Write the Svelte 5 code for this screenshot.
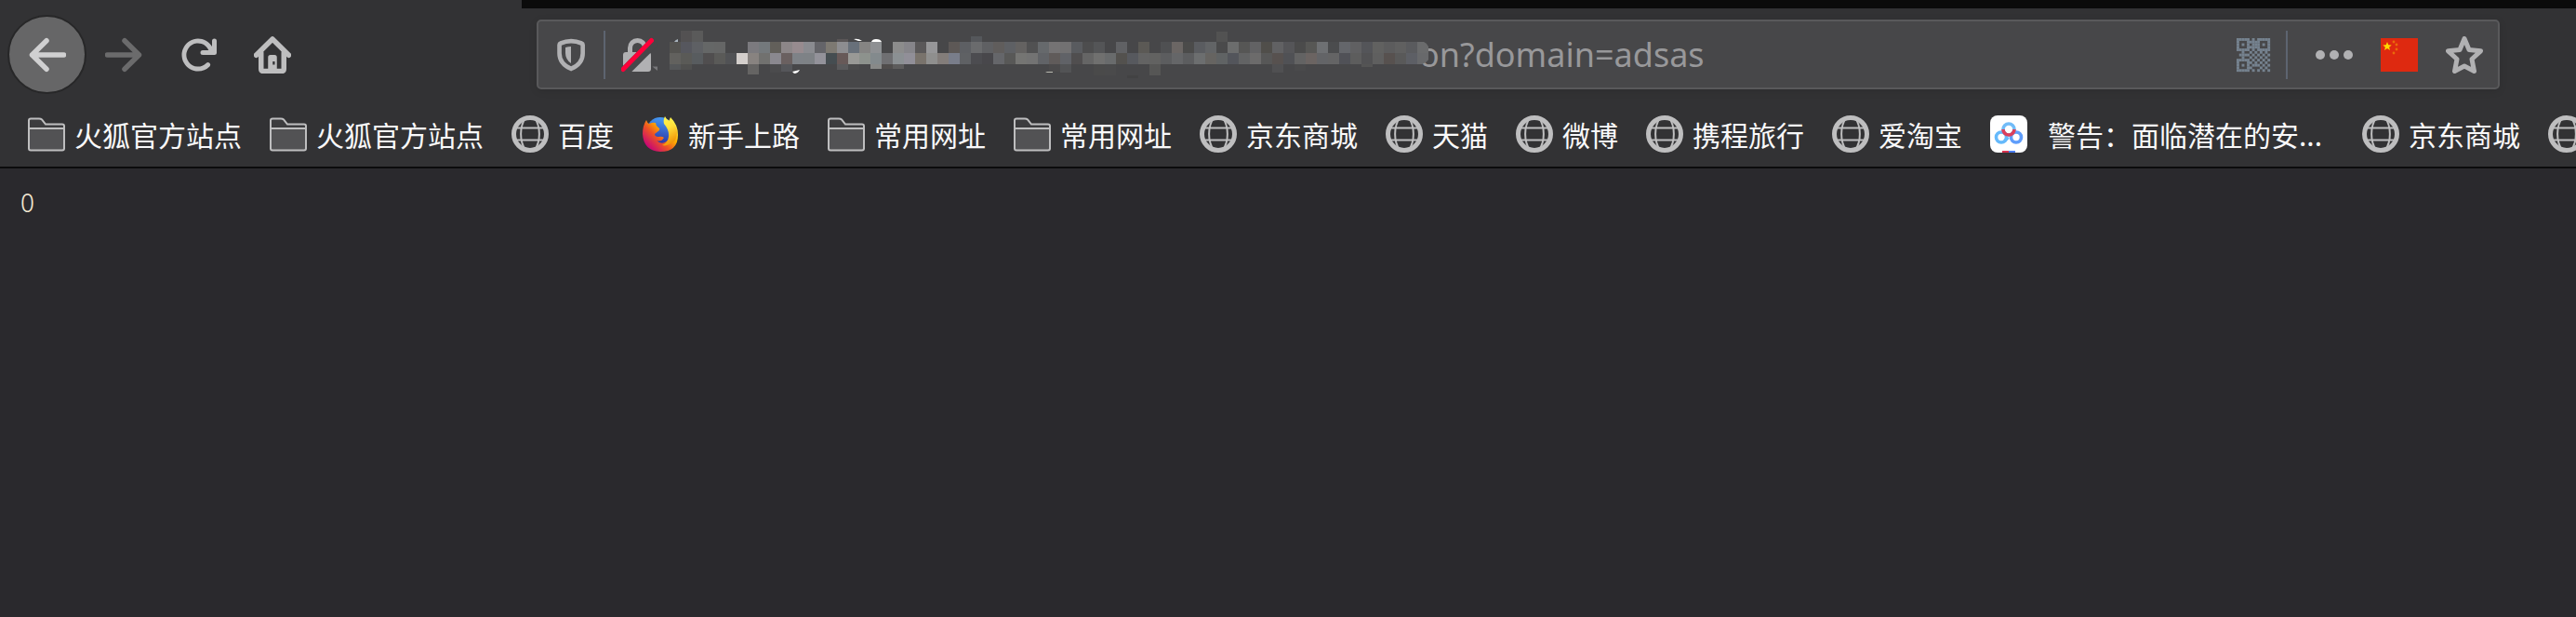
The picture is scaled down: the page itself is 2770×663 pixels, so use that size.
<script>
  const bookmarks = [
    { icon: 'folder', label: '火狐官方站点' },
    { icon: 'folder', label: '火狐官方站点' },
    { icon: 'globe', label: '百度' },
    { icon: 'firefox', label: '新手上路' },
    { icon: 'folder', label: '常用网址' },
    { icon: 'folder', label: '常用网址' },
    { icon: 'globe', label: '京东商城' },
    { icon: 'globe', label: '天猫' },
    { icon: 'globe', label: '微博' },
    { icon: 'globe', label: '携程旅行' },
    { icon: 'globe', label: '爱淘宝' },
    { icon: 'cloud', label: '警告：面临潜在的安...' },
    { icon: 'globe', label: '京东商城' },
    { icon: 'globe', label: '' }
  ];

  // Censored part of the address: two full rows of 12px cells, "-" leaves a cell empty.
  const upper =
    '545350 56575e 5e6064 656767 656666 - - 7b7a7e 74797c 625f5a 8c8688 978b8f 8a8b90 646469 7d7972 8d8d90 68707a 858483 8e9093 - 8c8c8c 86858a 5a5859 969698 - 5d5856 5d5f63 6a6b6d 5f6063 605d5c 5e6064 646261 515152 66696c 757374 727172 595b5f 4d4d4e 545557 - 606164 - 5b5955 - 4f5052 6b6664 4b4b4a 5a5c60 626466 4a4a4b 6c6d6d 565655 626264 504e4a 616163 555558 4b4b4b 575755 6e7073 4b4c4e 64666b 606062 545559 616160 5c5c5d 606060 5a5b5e'.split(' ');
  const lower =
    '62615e 5a5a57 585c5f 504e4f 5a5a58 515255 d4cfcc 888380 71716f 8a888f 6a6060 7e8287 7e8286 93929a 454d51 675958 999996 8d928d 838a8d 6f6f72 8b9093 918f98 79736c 8f8f8e 837d7a 797d8a 5f6164 4c4c50 48474b 65666a 585857 757573 737373 616367 605b5a 606267 504e4f 656565 70706f 696b6c 53514e 57595e 636363 626261 5c5d5f 656668 5c5d5f 6c6e6f 666461 606364 53555b 626364 6c6b6b 575757 57514f 505155 636363 6b6462 636467 646465 505157 5d5d5d 525254 5f5f5f 57514f 595959 5d5f65'.split(' ');
  // Cells above and below the rows: column, top, height, colour.
  const edges = [
    [1, 0, 12, '535152'], [2, 0, 12, '5a5a5a'], [15, 9, 3, '5a5657'], [27, 6, 6, '55575b'], [49, 1, 11, '525252'],
    [0, 36, 6, '555759'], [1, 36, 6, '50504f'], [7, 36, 11, '656463'], [9, 36, 9, '4b4b4d'], [10, 36, 8, '55565a'],
    [15, 36, 6, '5a5a5c'], [16, 36, 6, '4b4b4c'], [18, 36, 5, '888988'], [19, 36, 5, '504d4c'], [20, 36, 5, '5d5c5c'],
    [34, 36, 8, '4b4a4b'], [35, 36, 9, '525355'], [38, 36, 12, '4a4a4a'], [39, 36, 12, '4a4a4b'], [43, 36, 12, '565655'],
    [54, 36, 9, '505052'], [56, 36, 7, '4a4a4b'], [62, 36, 3, '545454'], [41, 48, 3, '424243']
  ];

  // 13 x 13 module pattern of the QR button.
  const qr = [
    '1111101011111', '1000111110001', '1010101110101', '1000111110001', '1111101011111',
    '0010010101010', '0111101010101', '0010010101010', '1111101010101', '1000110101010',
    '1010101110101', '1000110001010', '1111101010101'
  ];
  const modules = qr.flatMap((row, y) => [...row].map((on, x) => ({ on: on === '1', x, y }))).filter((m) => m.on);

  let address = $state('on?domain=adsas');
</script>

<div class="browser">
  <header>
    <div class="tabstrip"></div>
    <nav class="toolbar" aria-label="导航">
      <button class="back" aria-label="后退">
        <svg viewBox="0 0 16 16"><path class="line" d="M15 8H1.4M7.6 1.9 1.4 8l6.2 6.1" /></svg>
      </button>
      <button class="tool forward" aria-label="前进">
        <svg viewBox="0 0 16 16"><path class="line" d="M1 8h13.6M8.4 1.9 14.6 8l-6.2 6.1" /></svg>
      </button>
      <button class="tool" aria-label="重新载入">
        <svg viewBox="0 0 16 16"><path fill="currentColor" d="M15 1a1 1 0 0 0-1 1v2.418A6.995 6.995 0 1 0 8 15a6.954 6.954 0 0 0 4.95-2.05 1 1 0 0 0-1.414-1.414A5.019 5.019 0 1 1 12.549 6H10a1 1 0 0 0 0 2h5a1 1 0 0 0 1-1V2a1 1 0 0 0-1-1z" /></svg>
      </button>
      <button class="tool" aria-label="主页">
        <svg viewBox="0 0 16 16">
          <path class="line" d="M1 8.1 8 1.2l7 6.9M3.1 7v7q0 1 1 1h7.8q1 0 1-1V7" />
          <path fill="currentColor" fill-rule="evenodd" d="M6.100 15V9q0-1 1-1h1.800q1 0 1 1v6zM8.100 10.800h.9v1.400h-.9z" />
        </svg>
      </button>

      <div class="urlbar">
        <button class="inner" aria-label="跟踪保护">
          <svg viewBox="0 0 40 40">
            <path d="M20 4.500c4 0 8.500 1 12 2.500 1 .4 1.500 1 1.500 2v9.500c0 8-5.500 14.500-13.500 18-8-3.500-13.500-10-13.500-18V9c0-1 .5-1.600 1.500-2C11.500 5.500 16 4.500 20 4.500z" transform="translate(1.500 1) scale(.93)" fill="none" stroke="currentColor" stroke-width="5" />
            <path d="M20 11v18q-6-4-6-11v-6q3-1 6-1z" fill="currentColor" />
          </svg>
        </button>
        <span class="rule"></span>
        <button class="inner lock" aria-label="连接不安全">
          <svg viewBox="0 0 40 40">
            <path d="M9.500 19v-6.500a8 8 0 0 1 16 0V19" fill="none" stroke="currentColor" stroke-width="5" />
            <rect x="2" y="17" width="30" height="21" rx="3" fill="currentColor" />
            <path d="M3 38.500 36 5.500" stroke="#474749" stroke-width="11" />
            <path d="M2 35.500 32.500 4.500" stroke="#ff0039" stroke-width="5" stroke-linecap="round" />
            <path d="M33.500 32.500H39V37z" fill="#77777a" />
          </svg>
        </button>
        <svg class="mosaic" viewBox="0 0 816 52" aria-hidden="true">
          {#each upper as c, i}
            {#if c !== '-'}<rect x={i * 12} y="12" width="12" height="12" fill="#{c}" />{/if}
          {/each}
          {#each lower as c, i}
            <rect x={i * 12} y="24" width="12" height="12" fill="#{c}" />
          {/each}
          {#each edges as [col, y, h, c]}
            <rect x={col * 12} {y} width="12" height={h} fill="#{c}" />
          {/each}
          <path d="M804 12h7q3 1 5 5v7h-12z" fill="#6a6b6c" />
          <path d="M804 24h14q0 9-9 12h-5z" fill="#68696b" />
          <path d="M5 12q1-2 4-3v3z" fill="#a9b4bd" />
          <path d="M198 9q5-1 9 2h-4q-3-1-5-2zM217 12q1-3 5-3 5 0 6 3zM132 44l8-2q-2 4-6 4z" fill="#fff" />
          <path d="M404 44h8v1h-6z" fill="#b9b9b0" />
        </svg>
        <input type="text" aria-label="地址" bind:value={address} spellcheck="false" />
        <button class="inner" aria-label="二维码">
          <svg viewBox="0 0 40 40" fill="#75828f">
            {#each modules as m}
              <rect x={2 + m.x * 2.77} y={2 + m.y * 2.77} width="2.900" height="2.900" />
            {/each}
          </svg>
        </button>
        <span class="rule"></span>
        <button class="inner" aria-label="页面操作">
          <svg viewBox="0 0 40 40" fill="currentColor"><circle cx="5" cy="20" r="5" /><circle cx="20" cy="20" r="5" /><circle cx="35" cy="20" r="5" /></svg>
        </button>
        <button class="inner" aria-label="中国">
          <svg viewBox="0 0 40 40">
            <path fill="#de2910" d="M0 2h40v36H0z" />
            <path fill="#ffd800" d="m7 6 1.300 3.300 3.400.2-2.600 2.200.9 3.300-3-1.900L4 15l.9-3.300-2.600-2.200 3.400-.2z" />
            <g fill="#ea6a0b"><circle cx="14" cy="6" r="1.400" /><circle cx="17" cy="9" r="1.400" /><circle cx="17" cy="14" r="1.400" /><circle cx="14" cy="18" r="1.400" /></g>
          </svg>
        </button>
        <button class="inner" aria-label="添加书签">
          <svg viewBox="0 0 40 40"><path d="m20 2.500 5 12 12.500 1.300-9.500 8.700 2.500 13L20 32 9.500 37.500l2.500-13-9.500-8.700L15 14.500z" fill="none" stroke="currentColor" stroke-width="5" stroke-linejoin="round" /></svg>
        </button>
      </div>
    </nav>

    <nav class="bookmarks" aria-label="书签">
      {#each bookmarks as b}
        <a href="#bookmark" class:wide={b.icon === 'cloud'} aria-label={b.label || '书签'}>
          {#if b.icon === 'folder'}
            <svg viewBox="0 0 40 40">
              <path d="M1 36V5q0-2 2-2h10q2 0 3 1l4 5h17q2 0 2 2v25q0 2-2 2H3q-2 0-2-2z" fill="#3c3c3e" />
              <path d="M1 14h38v23H1z" fill="#525254" />
              <path d="M1 35.500V5.500q0-2 2-2h9q2 0 3 1l4 5h18q2 0 2 2v24q0 2-2 2H3q-2 0-2-2zM1 14h38" fill="none" stroke="currentColor" stroke-width="2" />
            </svg>
          {:else if b.icon === 'globe'}
            <svg viewBox="0 0 40 40" fill="none" stroke="currentColor">
              <circle cx="20" cy="20" r="17.500" stroke-width="5" />
              <path d="M15 3C8.500 12 8.500 28 15 37M25 3c6.500 9 6.500 25 0 34M4 13.500h32M4 26.500h32" stroke-width="2" />
            </svg>
          {:else if b.icon === 'firefox'}
            <svg viewBox="0 0 40 40">
              <defs>
                <linearGradient id="fox" x1=".85" y1=".1" x2=".1" y2=".85">
                  <stop offset="0" stop-color="#fff14a" /><stop offset=".35" stop-color="#ffb000" /><stop offset=".62" stop-color="#ee5324" /><stop offset="1" stop-color="#c4007c" />
                </linearGradient>
                <linearGradient id="sky" x1=".6" y1="0" x2=".4" y2="1">
                  <stop offset="0" stop-color="#459cf5" /><stop offset="1" stop-color="#2b2b9c" />
                </linearGradient>
                <linearGradient id="tail" x1=".3" y1="0" x2=".6" y2="1">
                  <stop offset="0" stop-color="#fff44f" /><stop offset=".4" stop-color="#ffe03a" /><stop offset="1" stop-color="#f08a00" />
                </linearGradient>
              </defs>
              <circle cx="20" cy="17" r="15" fill="url(#sky)" />
              <path d="M5 5q1 3 3 4 4-2 7-1 0 3 3 5 2 1 1 3l-5 4q0 3 4 3 4-1 6 1-3 5-8 3 4 4 9 2 7-3 6-12-1-6-4-9 3-2 4-6 8 8 8 19 0 18-19 18Q2 38 1 20 1 11 5 5z" fill="url(#fox)" />
              <path d="M25 1q-2 4-1 8 6 7 5 14-1 7-7 9 6 2 14-5Q42 13 30 6q-4-2-5-5z" fill="url(#tail)" />
            </svg>
          {:else}
            <svg viewBox="0 0 40 40">
              <rect width="40" height="40" rx="8" fill="#fff" />
              <g fill="none" stroke-width="3.600">
                <circle cx="12" cy="23.500" r="5.500" stroke="#65b9fb" />
                <circle cx="28" cy="23.500" r="5.500" stroke="#5f9dfb" />
                <circle cx="20" cy="15" r="6" stroke="#71bcf8" />
                <path d="M14 15a6 6 0 0 0 12 0" stroke="#dc3f5c" />
                <path d="m15.500 27.500 4-4" stroke="#65b9fb" />
              </g>
              <path d="M13 38h7v2h-7z" fill="#d8344f" /><path d="M20 38h7v2h-7z" fill="#4b7df0" />
            </svg>
          {/if}
          <span>{b.label}</span>
        </a>
      {/each}
    </nav>
  </header>
  <main>0</main>
</div>

<style>
  :global(body) {
    background: #2a292d;
  }
  .browser {
    overflow: hidden;
    font-family: 'Noto Sans CJK SC', sans-serif;
  }
  header {
    background: #323234;
    border-bottom: 2px solid #0c0c0d;
  }
  .tabstrip {
    height: 9px;
    margin-left: 561px;
    background: #0b0b0b;
  }
  button {
    display: flex;
    align-items: center;
    justify-content: center;
    flex: none;
    padding: 0;
    border: 0;
    background: none;
    color: inherit;
  }
  svg {
    display: block;
    flex: none;
    width: 40px;
    height: 40px;
  }
  .line {
    fill: none;
    stroke: currentColor;
    stroke-width: 2.2;
    stroke-linecap: round;
    stroke-linejoin: round;
  }
  .toolbar {
    display: flex;
    align-items: center;
    padding: 7px 82px 7px 8px;
    color: #bebebf;
  }
  .back {
    box-sizing: border-box;
    width: 85px;
    height: 85px;
    border: 2px solid #272728;
    border-radius: 50%;
    background: #666667;
    color: #d0d0d1;
  }
  .tool {
    margin-left: 40px;
  }
  .forward {
    margin-left: 20px;
    color: #6b6b6c;
  }
  .urlbar {
    display: flex;
    align-items: center;
    flex: 1;
    min-width: 0;
    box-sizing: border-box;
    height: 75px;
    margin-left: 264px;
    padding: 0 16px 0 15px;
    border: 2px solid #59595b;
    border-radius: 5px;
    background: #474749;
    box-shadow: 0 2px 8px rgba(0, 0, 0, 0.1);
    color: #b1b1b3;
  }
  .rule {
    flex: none;
    width: 2px;
    height: 52px;
    margin: 0 15px;
    background: #5d6470;
  }
  .lock {
    margin-left: 2px;
  }
  .mosaic {
    position: relative;
    width: 816px;
    height: 52px;
    margin-left: 12px;
    z-index: 1;
  }
  input {
    flex: 1;
    min-width: 0;
    margin-left: -10px;
    padding: 0;
    border: 0;
    outline: 0;
    background: none;
    color: #98989a;
    font: 36px/50px 'Noto Sans', sans-serif;
  }
  .rule + .inner:not(.lock) {
    margin-left: 15px;
  }
  .inner + .inner {
    margin-left: 30px;
  }
  .bookmarks {
    display: flex;
    align-items: center;
    gap: 30px;
    height: 71px;
    padding-left: 30px;
    color: #bebebf;
  }
  a {
    display: flex;
    align-items: center;
    flex: none;
    gap: 10px;
    color: inherit;
    text-decoration: none;
  }
  a span {
    color: #f9f9fa;
    font-size: 30px;
    line-height: 44px;
    white-space: nowrap;
  }
  .wide {
    gap: 22px;
    width: 370px;
  }
  main {
    padding: 15px 22px;
    color: #f3e8d2;
    font: 300 28px/40px 'Noto Sans CJK SC', sans-serif;
  }
</style>
